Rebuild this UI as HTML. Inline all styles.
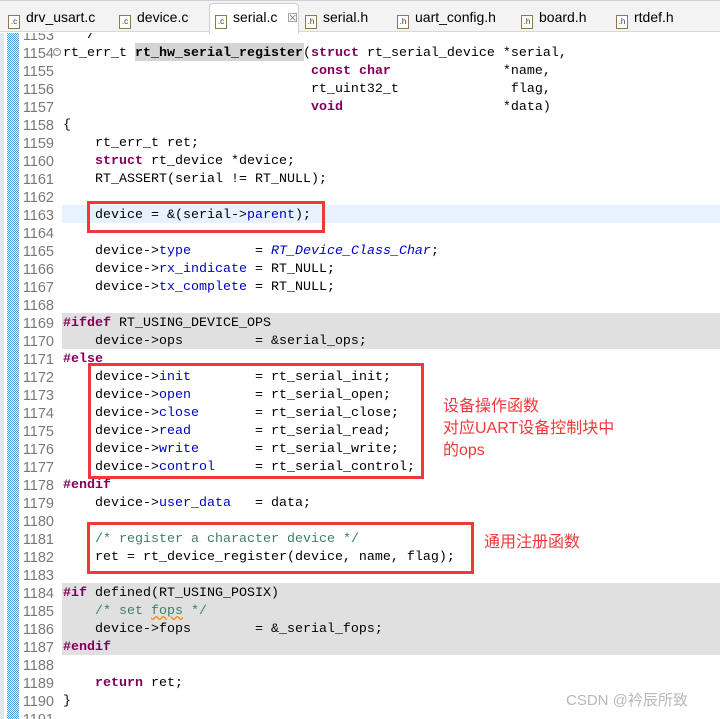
<!DOCTYPE html>
<html><head><meta charset="utf-8"><style>
body{margin:0;width:720px;height:719px;overflow:hidden;background:#fff;position:relative;font-family:"Liberation Mono",monospace}
.tabs{position:absolute;left:0;top:0;width:720px;height:30px;background:#f3f3f3;border-top:1px solid #d0d0d0;border-bottom:1px solid #d8d8d8;font-family:"Liberation Sans",sans-serif;font-size:14px;color:#000;z-index:2}
.tab{position:absolute;top:8px;white-space:nowrap}
.ic{display:inline-block;width:10px;height:12px;border:1px solid #8a7a50;font-size:8px;line-height:12px;text-align:center;margin-right:6px;vertical-align:-2px;background:#fff;color:#334}
.act{position:absolute;left:209px;top:2px;width:88px;height:30px;background:#fff;border:1px solid #cfcfcf;border-bottom:none;border-radius:4px 4px 0 0}
.area{position:absolute;left:0;top:33px;width:720px;height:686px;overflow:hidden}
.left{position:absolute;left:0;top:0;width:4px;height:686px;background:#e6e6e6}
.bar{position:absolute;left:7px;top:0;width:12px;height:686px;background-color:#3b8fe0;background-image:repeating-conic-gradient(#fff 0 25%,transparent 0 50%);background-size:2px 2px;opacity:.9}
.ln{position:absolute;left:18px;width:36px;text-align:right;font-size:14.5px;color:#787878;line-height:18px;font-family:"Liberation Sans",sans-serif}
.c{position:absolute;left:63px;font-size:13.33px;line-height:18px;white-space:pre;color:#000}
.k{color:#7f0055;font-weight:bold}
.f{color:#0000c0}
.i{color:#0000c0;font-style:italic}
.m{color:#3f7f5f}
.g{position:absolute;left:62px;width:658px;background:#e0e0e0}
.box{position:absolute;border:3px solid #f0373a;box-sizing:border-box}
.ann{position:absolute;color:#f0373a;font-family:"Liberation Sans","Noto Sans CJK SC",sans-serif;font-size:16px;line-height:22px}
</style></head><body>
<div class="tabs">
<div class="act"></div>
<div class="tab" style="left:8px"><span class="ic">.c</span>drv_usart.c</div>
<div class="tab" style="left:119px"><span class="ic">.c</span>device.c</div>
<div class="tab" style="left:215px"><span class="ic">.c</span>serial.c <span style="color:#777;font-size:12px;margin-left:6px">☒</span></div>
<div class="tab" style="left:305px"><span class="ic">.h</span>serial.h</div>
<div class="tab" style="left:397px"><span class="ic">.h</span>uart_config.h</div>
<div class="tab" style="left:521px"><span class="ic">.h</span>board.h</div>
<div class="tab" style="left:616px"><span class="ic">.h</span>rtdef.h</div>
</div>
<div class="area">
<div class="left"></div><div class="bar"></div>
<div style="position:absolute;left:62px;top:172px;width:658px;height:18px;background:#e8f2fe"></div>
<div class="g" style="top:280px;height:36px"></div>
<div class="g" style="top:550px;height:72px"></div>
<div style="position:absolute;left:135px;top:10px;width:169px;height:18px;background:#d4d4d4"></div>
<div style="position:absolute;left:53px;top:15px;width:8px;height:8px;border:1px solid #888;border-radius:50%;box-sizing:border-box;font-size:8px;line-height:6px;text-align:center;color:#555">-</div>
<div id="code"></div>
</div>
<script>
var L=[
[1153,'  */'],
[1154,'rt_err_t <b>rt_hw_serial_register</b>(<span class="k">struct</span> rt_serial_device *serial,'],
[1155,'                               <span class="k">const char</span>              *name,'],
[1156,'                               rt_uint32_t              flag,'],
[1157,'                               <span class="k">void</span>                    *data)'],
[1158,'{'],
[1159,'    rt_err_t ret;'],
[1160,'    <span class="k">struct</span> rt_device *device;'],
[1161,'    RT_ASSERT(serial != RT_NULL);'],
[1162,''],
[1163,'    device = &amp;(serial-&gt;<span class="f">parent</span>);'],
[1164,''],
[1165,'    device-&gt;<span class="f">type</span>        = <span class="i">RT_Device_Class_Char</span>;'],
[1166,'    device-&gt;<span class="f">rx_indicate</span> = RT_NULL;'],
[1167,'    device-&gt;<span class="f">tx_complete</span> = RT_NULL;'],
[1168,''],
[1169,'<span class="k">#ifdef</span> RT_USING_DEVICE_OPS'],
[1170,'    device-&gt;ops         = &amp;serial_ops;'],
[1171,'<span class="k">#else</span>'],
[1172,'    device-&gt;<span class="f">init</span>        = rt_serial_init;'],
[1173,'    device-&gt;<span class="f">open</span>        = rt_serial_open;'],
[1174,'    device-&gt;<span class="f">close</span>       = rt_serial_close;'],
[1175,'    device-&gt;<span class="f">read</span>        = rt_serial_read;'],
[1176,'    device-&gt;<span class="f">write</span>       = rt_serial_write;'],
[1177,'    device-&gt;<span class="f">control</span>     = rt_serial_control;'],
[1178,'<span class="k">#endif</span>'],
[1179,'    device-&gt;<span class="f">user_data</span>   = data;'],
[1180,''],
[1181,'    <span class="m">/* register a character device */</span>'],
[1182,'    ret = rt_device_register(device, name, flag);'],
[1183,''],
[1184,'<span class="k">#if</span> defined(RT_USING_POSIX)'],
[1185,'    <span class="m">/* set <u style="text-decoration-color:#f80;text-decoration-style:wavy">fops</u> */</span>'],
[1186,'    device-&gt;fops        = &amp;_serial_fops;'],
[1187,'<span class="k">#endif</span>'],
[1188,''],
[1189,'    <span class="k">return</span> ret;'],
[1190,'}'],
[1191,'']];
var h='';
L.forEach(function(a){var t=12+(a[0]-1154)*18;h+='<div class="ln" style="top:'+t+'px">'+a[0]+'</div><div class="c" style="top:'+t+'px">'+a[1]+'</div>';});
document.getElementById('code').innerHTML=h;
</script>
<div class="box" style="left:87px;top:201px;width:238px;height:32px"></div>
<div class="box" style="left:88px;top:363px;width:336px;height:116px"></div>
<div class="box" style="left:87px;top:522px;width:387px;height:52px"></div>
<div class="ann" style="left:443px;top:396px">设备操作函数<br>对应UART设备控制块中<br>的ops</div>
<div class="ann" style="left:484px;top:532px">通用注册函数</div>
<div style="position:absolute;left:566px;top:689px;font-family:'Liberation Sans','Noto Sans CJK SC',sans-serif;font-size:15px;color:#b8b8b8">CSDN @衿辰所致</div>
</body></html>
